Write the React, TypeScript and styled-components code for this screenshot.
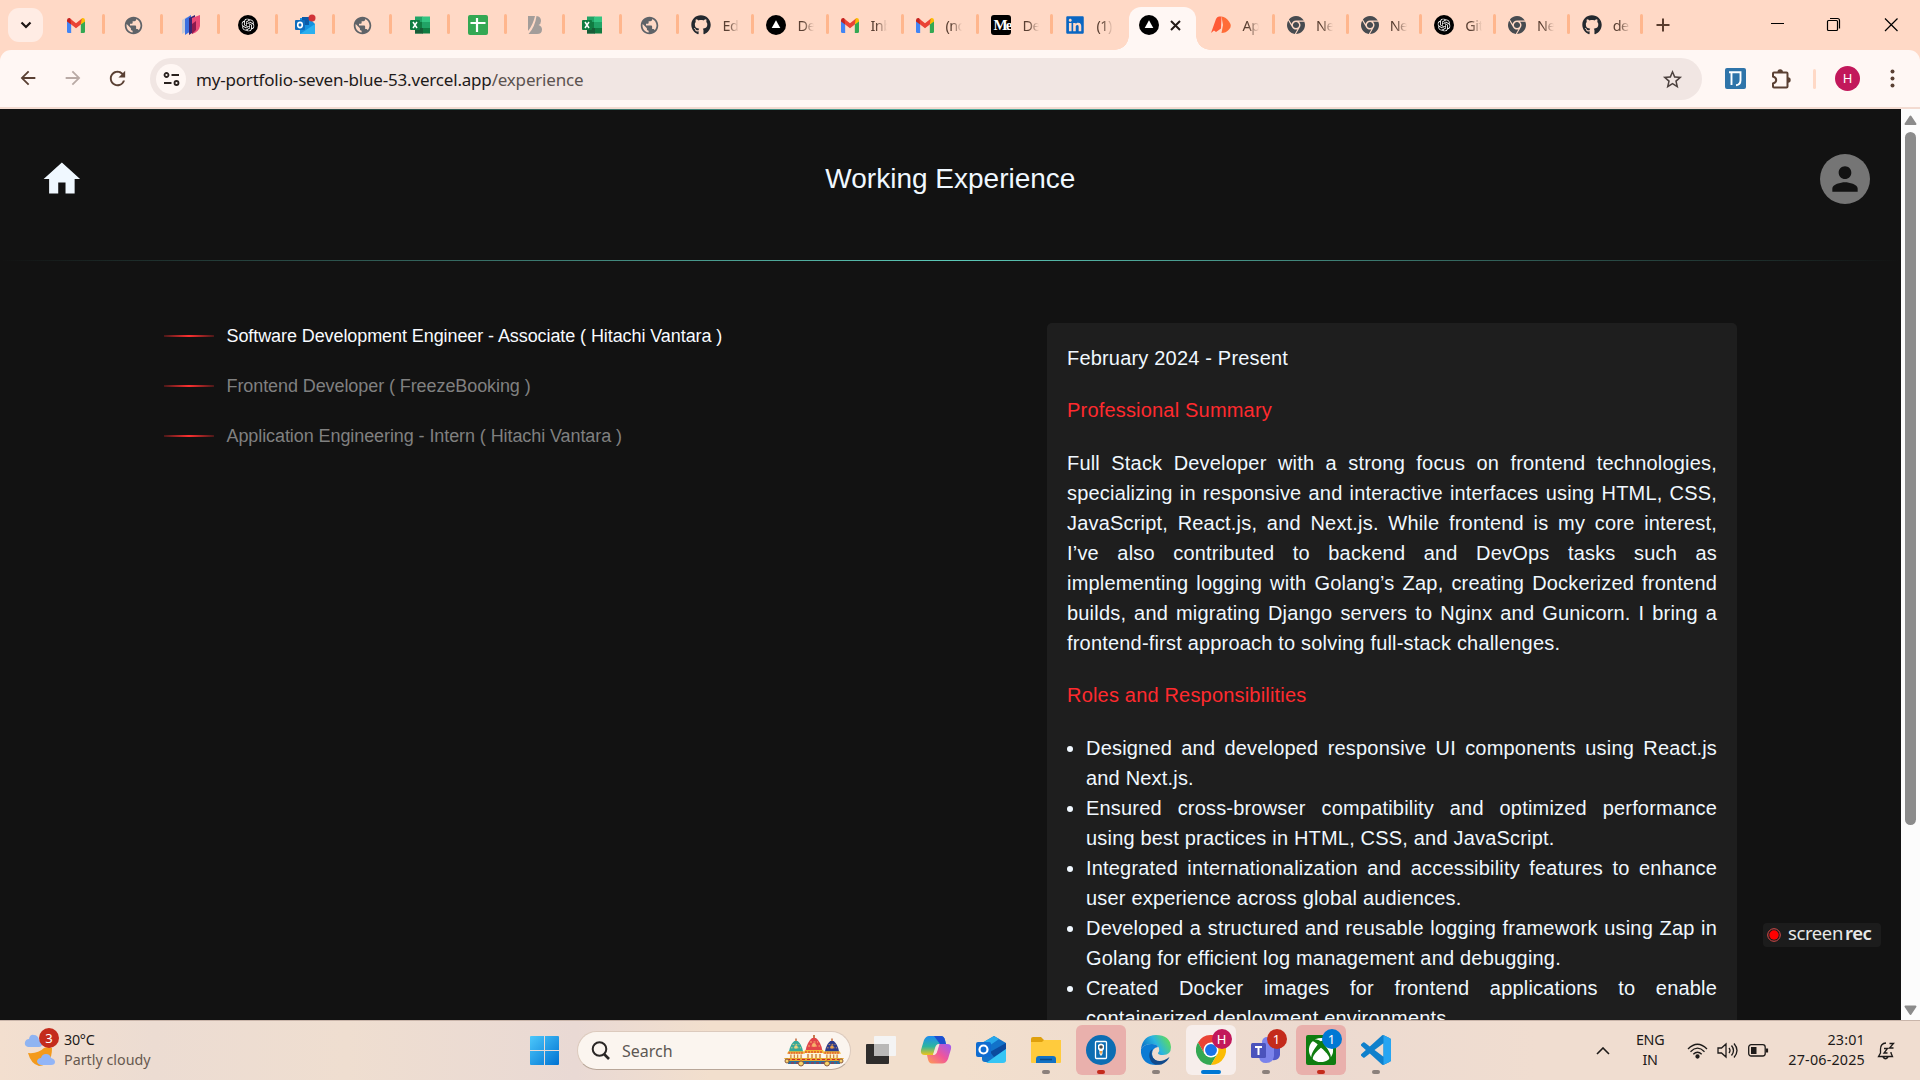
import React from "react";
import styled, { createGlobalStyle, css } from "styled-components";
import { FaGithub, FaChrome, FaLinkedin, FaXbox } from "react-icons/fa6";
import { MdPublic, MdStarOutline, MdArrowBack, MdArrowForward, MdRefresh, MdPerson, MdHome } from "react-icons/md";
import { SiOpenai } from "react-icons/si";

const ui = `"Noto Sans", "Open Sans", sans-serif`;
const arial = `"Liberation Sans", Arial, sans-serif`;

const Global = createGlobalStyle`
  * { box-sizing: border-box; }
  body { margin: 0; overflow: hidden; background: #121212; }
  svg { display: block; flex: none; }
`;

const Screen = styled.div`
  width: 1920px;
  height: 1080px;
  display: flex;
  flex-direction: column;
  overflow: hidden;
  font-family: ${ui};
`;

/* ---------- browser chrome ---------- */
const TabStrip = styled.div`
  height: 50px;
  background: #ffd9c6;
  display: flex;
  align-items: stretch;
  flex: none;
`;
const TabSearch = styled.div`
  width: 35px;
  height: 34px;
  margin: 8px 4px 8px 8px;
  border-radius: 11px;
  background: #ffece4;
  display: flex;
  align-items: center;
  justify-content: center;
`;
const Tab = styled.div<{ $w: number; $label?: boolean }>`
  width: ${(p) => p.$w}px;
  flex: none;
  display: flex;
  align-items: center;
  justify-content: ${(p) => (p.$label ? "flex-start" : "center")};
  padding-left: ${(p) => (p.$label ? 13 : 0)}px;
  position: relative;
`;
const TabRule = styled.i`
  position: absolute;
  right: -1px;
  top: 14px;
  width: 3px;
  height: 20px;
  border-radius: 2px;
  background: #ffb68d;
`;
const TabText = styled.span`
  margin-left: 11px;
  white-space: nowrap;
  font-size: 14.5px;
  letter-spacing: -0.6px;
  line-height: 20px;
  color: #5a4033;
  mask-image: linear-gradient(90deg, #000 6px, transparent 17px);
`;
const ActiveTab = styled.div`
  width: 67px;
  margin: 7px 2px 0 2px;
  padding-left: 10px;
  border-radius: 12px 12px 0 0;
  background: #fff7f4;
  display: flex;
  align-items: center;
  gap: 11px;
  padding-bottom: 7px;
  position: relative;
  &::before, &::after {
    content: "";
    position: absolute;
    bottom: 0;
    width: 14px;
    height: 14px;
  }
  &::before { left: -14px; background: radial-gradient(circle at 0 0, transparent 13.5px, #fff7f4 14px); }
  &::after { right: -14px; background: radial-gradient(circle at 100% 0, transparent 13.5px, #fff7f4 14px); }
`;
const NewTab = styled.div`
  width: 42px;
  display: flex;
  align-items: center;
  justify-content: center;
`;
const WindowButtons = styled.div`
  margin-left: auto;
  display: flex;
  svg { width: 57px; height: 50px; }
`;

const ToolbarBack = styled.div`
  height: 59px;
  flex: none;
  background: #ffd9c6;
`;
const Toolbar = styled.div`
  height: 59px;
  border-radius: 11px 11px 0 0;
  background: #fff7f4;
  border-bottom: 2px solid #f3dbd1;
  display: flex;
  align-items: center;
  padding-left: 5px;
`;
const NavButton = styled.div<{ $dim?: boolean }>`
  width: 45px;
  height: 45px;
  margin-top: -1px;
  display: flex;
  align-items: center;
  justify-content: center;
  color: ${(p) => (p.$dim ? "#b9aaa5" : "#5a4033")};
`;
const Address = styled.div`
  margin-left: 10px;
  margin-top: 1px;
  width: 1552px;
  height: 42px;
  border-radius: 21px;
  background: #f1e6e3;
  display: flex;
  align-items: center;
  padding: 0 18px 0 6px;
`;
const SiteInfo = styled.div`
  width: 30px;
  height: 30px;
  border-radius: 50%;
  background: #fff7f4;
  display: flex;
  align-items: center;
  justify-content: center;
`;
const Url = styled.div`
  margin-left: 10px;
  padding-top: 2px;
  flex: 1;
  font-size: 17px;
  line-height: 24px;
  letter-spacing: -0.19px;
  color: #1e1a19;
  span { color: #5c5350; }
`;
const Actions = styled.div`
  display: flex;
  align-items: center;
  margin-left: 23px;
`;
const Divider = styled.i`
  width: 3px;
  height: 20px;
  border-radius: 2px;
  background: #ffd9c6;
  margin: 0 19px 0 20px;
`;
const Profile = styled.div`
  width: 25px;
  height: 25px;
  border-radius: 50%;
  background: #c2185b;
  color: #fff;
  font-size: 13px;
  line-height: 25px;
  text-align: center;
`;

/* ---------- page ---------- */
const Viewport = styled.div`
  height: 911px;
  flex: none;
  display: flex;
  background: #121212;
  position: relative;
`;
const fade = css`
  background: linear-gradient(90deg, rgba(92, 201, 184, 0) 0%, #5cc9b8 50%, rgba(92, 201, 184, 0) 100%);
`;
const Page = styled.main`
  width: 1901px;
  height: 911px;
  overflow: hidden;
  font-family: ${arial};
  color: #f0f8ff;
`;
const TopLine = styled.div`
  height: 1px;
  ${fade}
  opacity: 0.85;
`;
const Header = styled.header`
  height: 150px;
  padding: 0 31px 13px 40px;
  display: flex;
  align-items: center;
  justify-content: space-between;
`;
const HeaderLine = styled.div`
  height: 1px;
  ${fade}
`;
const Title = styled.h1`
  margin: 0 3px 0 0;
  font-weight: 400;
  font-size: 28px;
  line-height: 40px;
`;
const Avatar = styled.div`
  width: 50px;
  height: 50px;
  border-radius: 50%;
  background: #757575;
  color: #121212;
  display: flex;
  align-items: center;
  justify-content: center;
`;
const Columns = styled.div`
  display: flex;
  align-items: flex-start;
  padding: 62px 164px 0 164px;
  justify-content: space-between;
`;
const Jobs = styled.ul`
  list-style: none;
  margin: 0;
  padding: 0;
`;
const Job = styled.li<{ $active?: boolean }>`
  height: 50px;
  padding-bottom: 25px;
  display: flex;
  align-items: center;
  gap: 12.5px;
  font-size: 18px;
  letter-spacing: -0.085px;
  white-space: nowrap;
  color: ${(p) => (p.$active ? "#f8fbff" : "#808080")};
  &::before {
    content: "";
    width: 50px;
    height: 2px;
    background: linear-gradient(90deg, #4a1818, #ff3030 50%, #4a1818);
  }
`;
const JobName = styled.span`
  padding-top: 2px;
  line-height: 23px;
`;
const Card = styled.section`
  width: 690px;
  min-height: 900px;
  border-radius: 5px;
  background: #1e1e1e;
  padding: 20px;
  font-size: 20px;
  line-height: 30px;
  letter-spacing: 0.00938em;
`;
const Period = styled.p`
  margin: 0 0 22px;
`;
const Heading = styled.h2`
  margin: 0 0 23px;
  font: inherit;
  color: #ff2a2e;
`;
const Summary = styled.p`
  margin: 0 0 22px;
  text-align: justify;
`;
const Duties = styled.ul`
  margin: 0;
  padding-left: 19px;
  text-align: justify;
`;
const Scrollbar = styled.div`
  width: 19px;
  background: #fcfcfc;
  display: flex;
  flex-direction: column;
  align-items: center;
  padding: 6px 0 4px;
`;
const Thumb = styled.div`
  width: 11px;
  height: 693px;
  margin: 6px 0 auto;
  border-radius: 6px;
  background: #8b8b8b;
`;
const Recorder = styled.div`
  position: absolute;
  left: 1763px;
  top: 814px;
  width: 118px;
  height: 24px;
  border-radius: 4px;
  background: #1c1c1c;
  display: flex;
  align-items: center;
  padding-left: 4px;
  gap: 7px;
  font-size: 18.5px;
  line-height: 22px;
  letter-spacing: -0.4px;
  color: #e8e8e8;
  white-space: nowrap;
  b { font-weight: 600; margin-left: 2px; }
  span { margin-top: -5px; }
`;

/* ---------- taskbar ---------- */
const Taskbar = styled.footer`
  height: 60px;
  flex: none;
  border-top: 1px solid #c9b5aa;
  background: linear-gradient(90deg, #f3dfcf 0%, #ecdcd2 8%, #efded0 18%, #e9d9d4 30%, #f2dfcd 37%, #f2dfcd 50%, #ecdad0 68%, #f0ddd0 80%, #f0ddd0 100%);
  display: flex;
  align-items: center;
`;
const Weather = styled.div`
  width: 505px;
  padding-left: 24px;
  display: flex;
  align-items: center;
  gap: 8px;
`;
const WeatherIcon = styled.div`
  width: 32px;
  height: 46px;
  position: relative;
`;
const Count = styled.span<{ $c: string; $x: number; $y: number }>`
  position: absolute;
  left: ${(p) => p.$x}px;
  top: ${(p) => p.$y}px;
  width: 20px;
  height: 20px;
  line-height: 20px;
  border-radius: 50%;
  text-align: center;
  font-size: 13px;
  color: #fff;
  background: ${(p) => p.$c};
`;
const Lines = styled.div<{ $align: string; $spacing?: number }>`
  margin-top: -2px;
  text-align: ${(p) => p.$align};
  font-size: 14.3px;
  letter-spacing: ${(p) => p.$spacing ?? -0.25}px;
  line-height: 20px;
  color: #1d1a19;
  white-space: nowrap;
`;
const Muted = styled.div`
  color: #67594f;
  letter-spacing: 0;
`;
const Start = styled.div`
  width: 72px;
  padding-left: 25px;
`;
const SearchBox = styled.div`
  width: 274px;
  height: 39px;
  border-radius: 20px;
  background: #fbf5ef;
  border: 1px solid #dccabd;
  border-bottom-color: #b8a698;
  display: flex;
  align-items: center;
  padding: 0 5px 0 13px;
  font-size: 16px;
  color: #5d5753;
  span { margin-left: 12px; flex: 1; }
`;
const Apps = styled.div`
  display: flex;
  margin: -1px 0 0 2px;
`;
const AppButton = styled.div<{ $bg?: string; $bar?: string; $wide?: boolean }>`
  width: 50px;
  height: 50px;
  margin: 0 2.5px;
  border-radius: 6px;
  background: ${(p) => p.$bg ?? "transparent"};
  display: flex;
  align-items: center;
  justify-content: center;
  position: relative;
  &::after {
    content: "";
    position: absolute;
    bottom: 1px;
    width: ${(p) => (p.$wide ? 20 : 8)}px;
    height: 4px;
    border-radius: 2px;
    background: ${(p) => p.$bar ?? "transparent"};
  }
`;
const Tray = styled.div`
  margin-left: auto;
  display: flex;
  align-items: center;
  padding-right: 25px;
`;
const Spaced = styled.div<{ $l: number }>`
  margin-left: ${(p) => p.$l}px;
`;

/* ---------- icons ---------- */
const Gmail = () => (
  <svg width="18" height="15" viewBox="0 0 19 15" preserveAspectRatio="none">
    <path d="M0 2.500V13.500Q0 15 1.500 15H4.400V6z" fill="#4285f4" />
    <path d="M19 2.500V13.500Q19 15 17.500 15H14.600V6z" fill="#34a853" />
    <path d="M14.600 1.200V6.600L19 3.400V2Q18.600-.2 16.200.1z" fill="#fbbc04" />
    <path d="M4.400 1.200V6.600L0 3.400V2Q.4-.2 2.800.1z" fill="#c5221f" />
    <path d="M3.500.8 9.500 5.200 15.500.8 14.600 6.500 9.500 10.300 4.400 6.500z" fill="#ea4335" />
  </svg>
);
const Globe = () => <MdPublic size={21} color="#5f6368" />;
const Gpt = () => (
  <svg width="20" height="20" viewBox="0 0 20 20">
    <circle cx="10" cy="10" r="10" fill="#000" />
    <SiOpenai x={3.5} y={3.5} size={13} color="#fff" />
  </svg>
);
const Vercel = () => (
  <svg width="20" height="20" viewBox="0 0 20 20">
    <circle cx="10" cy="10" r="10" fill="#000" />
    <path d="M10 5.200 14.300 13H5.700z" fill="#fff" />
  </svg>
);
const Excel = () => (
  <svg width="20" height="20" viewBox="0 0 20 20">
    <path d="M5 1.500h7.500v17H5z" fill="#21a366" />
    <path d="M12 1.500h8v6h-8z" fill="#33c481" />
    <path d="M5 7h8v6H5zM12 13h8v5.500h-8z" fill="#107c41" />
    <path d="M12 7h8v6h-8z" fill="#21a366" />
    <path d="M5 13h8v5.500H5z" fill="#185c37" />
    <rect y="5" width="10" height="10" rx="1" fill="#107c41" />
    <path d="m3 7 4 6M7 7l-4 6" stroke="#fff" strokeWidth="1.500" />
  </svg>
);
const Sheet = () => (
  <svg width="20" height="20" viewBox="0 0 20 20">
    <rect width="20" height="20" rx="2" fill="#34a853" />
    <path d="M9 3v14M2.500 8h15" stroke="#fff" strokeWidth="2.200" />
  </svg>
);
const Stripes = () => (
  <svg width="20" height="20" viewBox="0 0 20 20">
    <path d="M1 5 6 2v14l-5 3z" fill="#c7ccd8" />
    <path d="M4 4 10 0v16l-6 4z" fill="#3b6fe0" />
    <path d="M8 3 14 0v16l-6 4z" fill="#3a2470" />
    <path d="M11 3 19 0v11q-1 6-8 8z" fill="#ea4a78" />
    <path d="M11 9 15 6v9l-4 4z" fill="#8e1b4e" />
  </svg>
);
const OutlookTab = () => (
  <svg width="22" height="22" viewBox="0 0 22 22">
    <path d="M6 4h9l6 6v10H6z" fill="#1490df" />
    <path d="M8 3h7v8H8z" fill="#0a5aa8" />
    <path d="M6 20 21 10v10z" fill="#2bb0ef" />
    <rect x="1" y="6" width="10" height="10" rx="1" fill="#0f6cbd" />
    <ellipse cx="6" cy="11" rx="2.300" ry="2.600" fill="none" stroke="#fff" strokeWidth="1.600" />
    <circle cx="18" cy="4" r="3.500" fill="#d13438" />
  </svg>
);
const Bee = () => (
  <svg width="16" height="20" viewBox="0 0 16 20">
    <path d="M1 1h7Q6 10 1 16zM9.500 1Q14 1.500 14 6q0 3-2.500 4 3.500 1 3.500 4.500 0 4.500-5 4.500H1.500Q8 12 9.500 1z" fill="#a39d9a" />
  </svg>
);
const Medium = () => (
  <svg width="20" height="20" viewBox="0 0 20 20">
    <rect width="20" height="20" rx="3" fill="#000" />
    <text x="2.500" y="15" fontFamily="Liberation Serif, serif" fontWeight="700" fontSize="15" fill="#fff" textLength="19">Me</text>
  </svg>
);
const Postman = () => (
  <svg width="20" height="18" viewBox="0 0 20 18">
    <path d="M0 17 5 3q1-2.500 3-2.500h2.500l-.5 12-5 3.500-2-1.500z" fill="#ff5a36" />
    <path d="M10.500.5q4.500.5 7.500 5 3.500 4.500 0 8-3 3.500-7.500 3.500L12 9z" fill="#ff6c37" />
  </svg>
);
const Outlook = () => (
  <svg width="32" height="30" viewBox="0 0 32 30">
    <path d="M7 8 19 1l12 7v16q0 3-3 3H10q-3 0-3-3z" fill="#1272c9" />
    <path d="M7 8 19 1l5 3-13 9z" fill="#28a8ea" />
    <path d="m15 17 16-9v6l-12 8z" fill="#0b4a9e" />
    <path d="M11 28 31 14v11q0 3-3 3z" fill="#35c5f5" />
    <rect x="1" y="7" width="15" height="15" rx="2" fill="#0f6cd0" />
    <circle cx="8.500" cy="14.500" r="4" fill="none" stroke="#fff" strokeWidth="2.200" />
  </svg>
);
const Chrome = () => (
  <svg width="30" height="30" viewBox="0 0 48 48">
    <path d="M24 12h20.800A24 24 0 0 0 3.200 12L13.600 30z" fill="#ea4335" />
    <path d="M24 48 34.400 30 13.600 30 3.200 12A24 24 0 0 0 24 48z" fill="#34a853" />
    <path d="M34.400 30 24 48A24 24 0 0 0 44.800 12H24z" fill="#fbbc04" />
    <circle cx="24" cy="24" r="12" fill="#fff" />
    <circle cx="24" cy="24" r="9.500" fill="#1a73e8" />
  </svg>
);
const Edge = () => (
  <svg width="32" height="32" viewBox="0 0 32 32">
    <defs>
      <linearGradient id="edge" x1="0" y1=".6" x2="1" y2=".2">
        <stop offset="0" stopColor="#0a6cc4" />
        <stop offset=".5" stopColor="#2bb5e0" />
        <stop offset="1" stopColor="#66e04a" />
      </linearGradient>
    </defs>
    <path d="M1 15Q3 1 16 1q14 0 15 12 0 8-8 8-5 0-5-2 2-2 1-5-2-4-7-4-8 0-11 5z" fill="url(#edge)" />
    <path d="M1 15q3-5 11-5 5 0 6 3-6 1-6 7 1 9 12 8-4 3-8 3Q3 31 1 19z" fill="#0c7bd4" />
    <path d="M12.500 15q-3 7 3 11 6 3 14-3-2 5-8 7.500-10 2-12-7-1-6 3-8.500z" fill="#114a8b" />
  </svg>
);
const Copilot = () => (
  <svg width="32" height="30" viewBox="0 0 32 30">
    <defs>
      <linearGradient id="cpa" x1="0" y1="0" x2="0" y2="1">
        <stop offset="0" stopColor="#1e8cf0" />
        <stop offset=".55" stopColor="#2cb5a0" />
        <stop offset="1" stopColor="#f0c419" />
      </linearGradient>
      <linearGradient id="cpb" x1="1" y1="0" x2="0" y2="1">
        <stop offset="0" stopColor="#9a5cf5" />
        <stop offset=".5" stopColor="#f0569a" />
        <stop offset="1" stopColor="#ffa050" />
      </linearGradient>
    </defs>
    <path d="M9 1h12q3 0 4 4l1 4h-7q-3 0-4 4l-2 7H5q-5 0-4-5L4 5q2-4 5-4z" fill="url(#cpa)" />
    <path d="M14 1h7q3 0 4 4l1 4h-6z" fill="#1d4fd0" />
    <path d="M22 28.500H12q-3 0-4-4L7 20h6q3 0 4-4l2-7h8q5 0 4 5l-3 10q-2 4.500-6 4.500z" fill="url(#cpb)" />
    <path d="M16 12q1-3 3.500-3L17 17q-1 3-4 3z" fill="#f4e4dc" />
  </svg>
);
const Folder = () => (
  <svg width="30" height="28" viewBox="0 0 30 28">
    <path d="M0 3q0-2 2-2h8l3 3h15q2 0 2 2v3H0z" fill="#dfa00d" />
    <path d="M0 6h11l2-2h17v22q0 1-1 1H1q-1 0-1-1z" fill="#ffcb3d" />
    <path d="M5 27v-4q0-3 3-3h14q3 0 3 3v4z" fill="#1272c4" />
    <path d="M9 23.500h12" stroke="#0a4a85" strokeWidth="1.500" />
  </svg>
);
const Scanner = () => (
  <svg width="30" height="30" viewBox="0 0 30 30">
    <circle cx="15" cy="15" r="15" fill="#0d6db3" />
    <rect x="9.500" y="6.500" width="11" height="17" rx="1" fill="#0d6db3" stroke="#fff" strokeWidth="1.300" />
    <path d="M12 10q3-3 6 0v4l-1.500 2v3L15 21l-1.500-2v-3L12 14z" fill="#fff" />
    <circle cx="15" cy="12" r="1.800" fill="#4b4b4b" />
    <path d="m13.500 16 1.500 4 1.500-4z" fill="#f39b3a" />
  </svg>
);
const Teams = () => (
  <svg width="32" height="30" viewBox="0 0 32 30">
    <circle cx="17" cy="7" r="5" fill="#7b83eb" />
    <path d="M20 11h10v9q-1 6-8 5z" fill="#5059c9" />
    <path d="M9 11h15v10q-1 7-8 7-6 0-7-6z" fill="#7b83eb" />
    <rect x="1" y="8" width="15" height="15" rx="1.500" fill="#4b53bc" />
    <path d="M5 12h7M8.500 12v8" stroke="#fff" strokeWidth="2" />
  </svg>
);
const Xbox = () => (
  <svg width="30" height="30" viewBox="0 0 30 30">
    <rect width="30" height="30" rx="2" fill="#107c10" />
    <FaXbox x={2.5} y={2.5} size={25} color="#fff" />
  </svg>
);
const Code = () => (
  <svg width="30" height="30" viewBox="0 0 24 24">
    <path fill="#0f80cc" d="M23.150 2.587L18.210.210a1.494 1.494 0 0 0-1.705.290l-9.460 8.630-4.120-3.128a.999.999 0 0 0-1.276.057L.327 7.261A1 1 0 0 0 .326 8.740L3.899 12 .326 15.260a1 1 0 0 0 .001 1.479L1.650 17.940a.999.999 0 0 0 1.276.057l4.120-3.128 9.460 8.630a1.492 1.492 0 0 0 1.704.290l4.942-2.377A1.500 1.500 0 0 0 24 20.060V3.939a1.500 1.500 0 0 0-.850-1.352zm-5.146 14.861L10.826 12l7.178-5.448v10.896z" />
    <path fill="#27a5f2" d="M18 .2l5.150 2.387q.85.400.85 1.352V20.060q0 1-.85 1.350L18 23.800z" />
  </svg>
);
const Puzzle = () => (
  <svg width="22" height="22" viewBox="0 0 22 22">
    <path d="M3 4.500h12.500q1 0 1 1v13q0 1-1 1H3q-1 0-1-1V15.500q3.200-1 3.200-3.500T2 8.500v-3q0-1 1-1z" fill="none" stroke="#5a4033" strokeWidth="2" />
    <path d="M6.500 4a2.700 2.700 0 0 1 5.400 0zM17 9.300a2.700 2.700 0 0 1 0 5.400z" fill="#5a4033" />
  </svg>
);
const Cart = ({ x, y, s, roof, trim }: { x: number; y: number; s: number; roof: string; trim: string }) => (
  <g transform={`translate(${x} ${y}) scale(${s})`}>
    <path d="M0-3V2" stroke="#b5501a" strokeWidth="1.500" />
    <path d="M-2 0h4q5 4 6.500 13h-17Q-7 4-2 0z" fill={roof} />
    <path d="M-4 4h8M-6 8H6" stroke={trim} strokeWidth="1" strokeDasharray="2 1.500" />
    <circle cy="7" r="2" fill={trim} />
    <path d="M-9 12H9l1.500 3h-21z" fill="#f2b632" />
    <path d="M-9 14H9" stroke="#d8262c" strokeWidth="1.200" strokeDasharray="2 1" />
    <path d="M-7.500 15.500h15V21h-15z" fill="#fff0c8" />
    <path d="M-6 16v5M-2 16v5M2 16v5M6 16v5" stroke="#c8772d" strokeWidth="1.300" />
  </g>
);
const Chariots = () => (
  <svg width="62" height="32" viewBox="0 0 62 32">
    <Cart x={13} y={6} s={0.85} roof="#35a898" trim="#f0d07c" />
    <Cart x={49} y={6} s={0.85} roof="#2b3a8c" trim="#e8a04a" />
    <Cart x={31} y={3} s={1} roof="#e2454a" trim="#f7b26c" />
    <path d="M1 23h60l-3 4H4z" fill="#e9a62c" />
    <path d="M5 26h52v3H5z" fill="#2a6f9e" />
    <path d="M4 24.500h54M8 28h46" stroke="#c8242c" strokeDasharray="3 2" />
    <g fill="#f7d36b" stroke="#8c5a3e" strokeWidth="1">
      <circle cx="4" cy="26" r="2" /><circle cx="18" cy="28.500" r="2.500" /><circle cx="44" cy="28.500" r="2.500" /><circle cx="58" cy="26" r="2" />
    </g>
  </svg>
);

type TabInfo = { icon: React.ReactNode; w: number; label?: string; noRule?: boolean };
const gh = <FaGithub size={20} color="#24292f" />;
const ch = <FaChrome size={18} color="#474b50" />;
const leftTabs: TabInfo[] = [
  ...[<Gmail />, <Globe />, <Stripes />, <Gpt />, <OutlookTab />, <Globe />, <Excel />, <Sheet />, <Bee />, <Excel />, <Globe />].map((icon) => ({ icon, w: 57.42 })),
  { icon: gh, w: 75, label: "Ed" },
  { icon: <Vercel />, w: 75, label: "De" },
  { icon: <Gmail />, w: 75, label: "Inb" },
  { icon: <Gmail />, w: 75, label: "(no" },
  { icon: <Medium />, w: 74, label: "De" },
  { icon: <FaLinkedin size={20} color="#0a66c2" />, w: 75, label: "(1)", noRule: true },
];
const rightTabs: TabInfo[] = [
  { icon: <Postman />, w: 75.5, label: "Ap" },
  { icon: ch, w: 73.7, label: "Ne" },
  { icon: ch, w: 73.7, label: "Ne" },
  { icon: <Gpt />, w: 73.7, label: "Git" },
  { icon: ch, w: 73.7, label: "Ne" },
  { icon: gh, w: 73.7, label: "de" },
];
const renderTab = (t: TabInfo, i: number) => (
  <Tab key={i} $w={t.w} $label={!!t.label}>
    {t.icon}
    {t.label && <TabText>{t.label}</TabText>}
    {!t.noRule && <TabRule />}
  </Tab>
);

const jobs = [
  "Software Development Engineer - Associate ( Hitachi Vantara )",
  "Frontend Developer ( FreezeBooking )",
  "Application Engineering - Intern ( Hitachi Vantara )",
];
const duties = [
  "Designed and developed responsive UI components using React.js and Next.js.",
  "Ensured cross-browser compatibility and optimized performance using best practices in HTML, CSS, and JavaScript.",
  "Integrated internationalization and accessibility features to enhance user experience across global audiences.",
  "Developed a structured and reusable logging framework using Zap in Golang for efficient log management and debugging.",
  "Created Docker images for frontend applications to enable containerized deployment environments.",
];

export default function App() {
  return (
    <Screen>
      <Global />
      <TabStrip>
        <TabSearch>
          <svg width="12" height="8" viewBox="0 0 12 8"><path d="m1.500 1.500 4.500 4.500 4.500-4.500" fill="none" stroke="#1d1513" strokeWidth="2.200" /></svg>
        </TabSearch>
        {leftTabs.map(renderTab)}
        <ActiveTab>
          <Vercel />
          <svg width="11" height="11" viewBox="0 0 11 11"><path d="m1 1 9 9M10 1l-9 9" stroke="#231a17" strokeWidth="2" /></svg>
        </ActiveTab>
        {rightTabs.map(renderTab)}
        <NewTab>
          <svg width="14" height="14" viewBox="0 0 14 14"><path d="M7 .5v13M.5 7h13" stroke="#5a3d2e" strokeWidth="2" /></svg>
        </NewTab>
        <WindowButtons>
          <svg viewBox="0 0 57 50"><path d="M22 23.500h13" stroke="#000" /></svg>
          <svg viewBox="0 0 57 50"><path d="M22.500 20.500h8q1 0 1 1v8q0 1-1 1h-8q-1 0-1-1v-8q0-1 1-1zM24 18.500h7.500q2 0 2 2v8" fill="none" stroke="#000" strokeWidth="1.200" /></svg>
          <svg viewBox="0 0 57 50"><path d="m22 18.500 12.500 12.500M34.500 18.500 22 31" stroke="#000" strokeWidth="1.200" /></svg>
        </WindowButtons>
      </TabStrip>

      <ToolbarBack>
        <Toolbar>
          <NavButton><MdArrowBack size={22} /></NavButton>
          <NavButton $dim><MdArrowForward size={22} /></NavButton>
          <NavButton><MdRefresh size={23} /></NavButton>
          <Address>
            <SiteInfo>
              <svg width="17" height="14" viewBox="0 0 17 14" fill="none" stroke="#2a211e" strokeWidth="1.800">
                <circle cx="3.500" cy="3" r="2" /><path d="M8.500 3H16M1 11h7.500" /><circle cx="13.500" cy="11" r="2" />
              </svg>
            </SiteInfo>
            <Url>my-portfolio-seven-blue-53.vercel.app<span>/experience</span></Url>
            <MdStarOutline size={23} color="#4d423f" />
          </Address>
          <Actions>
            <svg width="21" height="21" viewBox="0 0 21 21" fill="none" stroke="#fff" strokeWidth="1.900">
              <rect width="21" height="21" rx="2" fill="#2f74a9" stroke="none" />
              <path d="M4 4.200h2.500v12.800M6.500 4.200H11" />
              <path d="M11 4.200h4.500v8q0 4.500-4.500 5" />
            </svg>
            <Spaced $l={25}><Puzzle /></Spaced>
            <Divider />
            <Profile>H</Profile>
            <Spaced $l={30}>
              <svg width="5" height="20" viewBox="0 0 5 20" fill="#5a4033"><circle cx="2.500" cy="2.500" r="2" /><circle cx="2.500" cy="9.500" r="2" /><circle cx="2.500" cy="16.500" r="2" /></svg>
            </Spaced>
          </Actions>
        </Toolbar>
      </ToolbarBack>

      <Viewport>
        <Page>
          <TopLine />
          <Header>
            <MdHome size={43.75} />
            <Title>Working Experience</Title>
            <Avatar><MdPerson size={38} /></Avatar>
          </Header>
          <HeaderLine />
          <Columns>
            <Jobs>{jobs.map((j, i) => <Job key={j} $active={i === 0}><JobName>{j}</JobName></Job>)}</Jobs>
            <Card>
              <Period>February 2024 - Present</Period>
              <Heading>Professional Summary</Heading>
              <Summary>
                Full Stack Developer with a strong focus on frontend technologies, specializing in responsive and interactive
                interfaces using HTML, CSS, JavaScript, React.js, and Next.js. While frontend is my core interest, I’ve also
                contributed to backend and DevOps tasks such as implementing logging with Golang’s Zap, creating Dockerized
                frontend builds, and migrating Django servers to Nginx and Gunicorn. I bring a frontend-first approach to
                solving full-stack challenges.
              </Summary>
              <Heading>Roles and Responsibilities</Heading>
              <Duties>{duties.map((d) => <li key={d}>{d}</li>)}</Duties>
            </Card>
          </Columns>
        </Page>
        <Scrollbar>
          <svg width="13" height="11" viewBox="0 0 13 11"><path d="M6.500 1.500 11.500 9H1.500z" fill="#8b8b8b" stroke="#8b8b8b" strokeWidth="2" strokeLinejoin="round" /></svg>
          <Thumb />
          <svg width="13" height="11" viewBox="0 0 13 11"><path d="M6.500 9 11.500 1.500H1.500z" fill="#8b8b8b" stroke="#8b8b8b" strokeWidth="2" strokeLinejoin="round" /></svg>
        </Scrollbar>
        <Recorder>
          <svg width="14" height="14" viewBox="0 0 14 14"><circle cx="7" cy="7" r="6.300" fill="none" stroke="#d84a4a" /><circle cx="7" cy="7" r="4.700" fill="#f00" /></svg>
          <span>screen<b>rec</b></span>
        </Recorder>
      </Viewport>

      <Taskbar>
        <Weather>
          <WeatherIcon>
            <svg width="32" height="46" viewBox="0 0 32 46">
              <path d="M4 25q10 1 16-5 5-2 8 0 0 17-13 18Q7 36 4 25z" fill="#f39a1c" />
              <path d="M4 19q-4-1-3-5 1-3 4-3 1-5 5-4 4 0 5 5 3 0 3 4 0 3-3 3z" fill="#8fb4f2" />
              <path d="M17 37q-4-1-4-4 1-3 4-3 1-4 5-4 4 0 5 4 4 1 4 4t-4 3z" fill="#92b5f7" />
            </svg>
            <Count $c="#c42b1c" $x={15} $y={0}>3</Count>
          </WeatherIcon>
          <Lines $align="left">30°C<Muted>Partly cloudy</Muted></Lines>
        </Weather>
        <Start>
          <svg width="29" height="29" viewBox="0 0 29 29">
            <defs><linearGradient id="win" x1="0" y1="0" x2="1" y2="1"><stop offset="0" stopColor="#4cc8fb" /><stop offset="1" stopColor="#0072d2" /></linearGradient></defs>
            <path d="M0 1q0-1 1-1h13v14H0zM15 0h13q1 0 1 1v13H15zM0 15h14v14H1q-1 0-1-1zM15 15h14v13q0 1-1 1H15z" fill="url(#win)" />
          </svg>
        </Start>
        <SearchBox>
          <svg width="19" height="19" viewBox="0 0 19 19" fill="none" stroke="#2a2725" strokeWidth="2"><circle cx="8.500" cy="8" r="6.800" /><path d="m13 13 5 5" strokeWidth="2.600" /></svg>
          <span>Search</span>
          <Chariots />
        </SearchBox>
        <Apps>
          <AppButton>
            <svg width="30" height="28" viewBox="0 0 30 28"><rect y="8" width="23" height="20" rx="1" fill="#2f2d2c" /><rect x="8" width="22" height="20" rx="1" fill="#f4f4f4" /><path d="M8 8h15v12H8z" fill="#b9b8b7" /></svg>
          </AppButton>
          <AppButton><Copilot /></AppButton>
          <AppButton><Outlook /></AppButton>
          <AppButton $bar="#8b807b"><Folder /></AppButton>
          <AppButton $bg="#e9b0ac" $bar="#c42b1c"><Scanner /></AppButton>
          <AppButton $bar="#8b807b"><Edge /></AppButton>
          <AppButton $bg="#f7eeeb" $bar="#0078d4" $wide><Chrome /><Count $c="#c2185b" $x={26} $y={4}>H</Count></AppButton>
          <AppButton $bar="#8b807b"><Teams /><Count $c="#c42b1c" $x={26} $y={4}>1</Count></AppButton>
          <AppButton $bg="#e9b0ac" $bar="#c42b1c"><Xbox /><Count $c="#0078d4" $x={26} $y={4}>1</Count></AppButton>
          <AppButton $bar="#8b807b"><Code /></AppButton>
        </Apps>
        <Tray>
          <svg width="14" height="8" viewBox="0 0 14 8"><path d="m1 7 6-6 6 6" fill="none" stroke="#1d1a19" strokeWidth="1.600" /></svg>
          <Spaced $l={26}><Lines $align="center">ENG<br />IN</Lines></Spaced>
          <Spaced $l={23}>
            <svg width="21" height="16" viewBox="0 0 21 16" fill="none" stroke="#1d1a19" strokeWidth="1.300"><path d="M1 6q9.500-9.500 19 0M3.500 8.700q7-7 14 0M6.300 11.300q4.200-4.200 8.400 0" /><circle cx="10.500" cy="13.500" r="1.500" fill="#1d1a19" /></svg>
          </Spaced>
          <Spaced $l={9}>
            <svg width="21" height="17" viewBox="0 0 21 17" fill="none" stroke="#1d1a19" strokeWidth="1.300"><path d="M1 6h3.500L9 2v13l-4.500-4H1zM12 6q2 2.500 0 5M14.500 3.500q4 5 0 10M17 1.500q6 7 0 14" /></svg>
          </Spaced>
          <Spaced $l={10}>
            <svg width="21" height="13" viewBox="0 0 21 13" fill="none" stroke="#1d1a19" strokeWidth="1.300"><rect x=".7" y=".7" width="16.500" height="11.300" rx="2.500" /><path d="M3 3h5.500v7H3z" fill="#1d1a19" stroke="none" /><path d="M19 4.500v4" strokeWidth="2.200" /></svg>
          </Spaced>
          <Spaced $l={19}><Lines $align="right" $spacing={0.2}>23:01<br />27-06-2025</Lines></Spaced>
          <Spaced $l={12}>
            <svg width="18" height="18" viewBox="0 0 18 18" fill="none" stroke="#1d1a19" strokeWidth="1.300"><path d="M9 1Q3.500 1.500 3.500 7v4L1.500 14.500h14L14 11v-1M6 15q2.500 3.500 5 0M7 6.500h3.500L7 11h3.500M12.500 1.500h4l-4 4.500h4" /></svg>
          </Spaced>
        </Tray>
      </Taskbar>
    </Screen>
  );
}
